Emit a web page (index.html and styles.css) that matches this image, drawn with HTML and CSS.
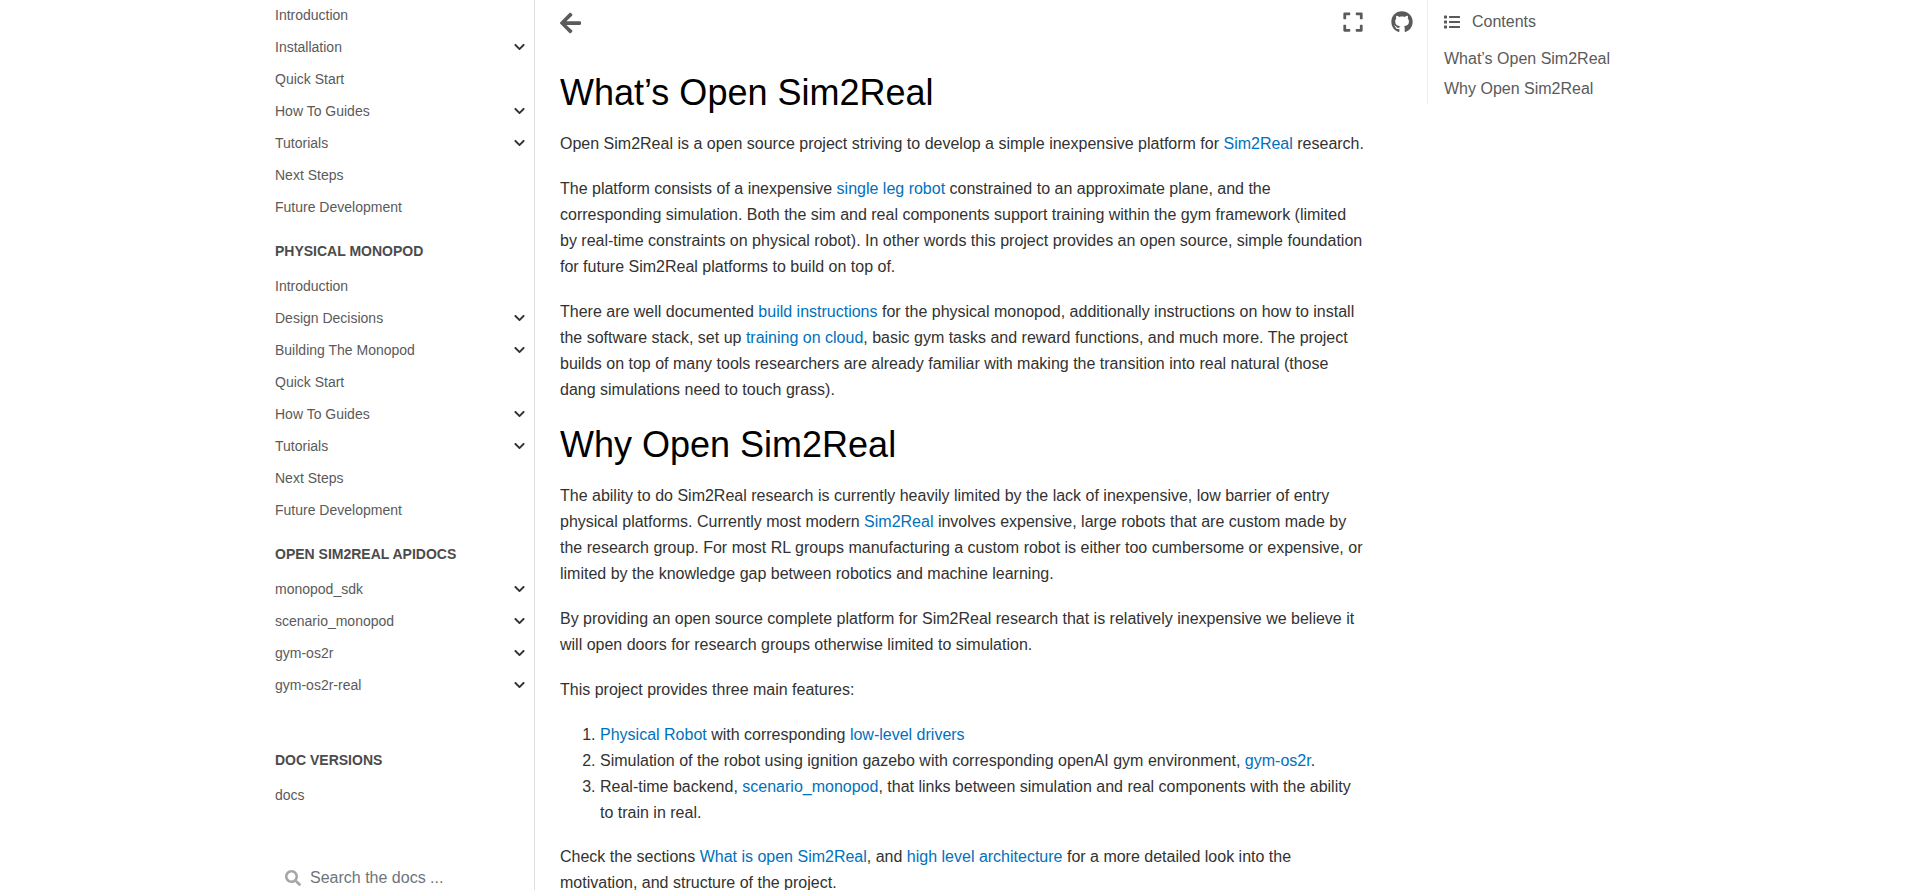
FILE: index.html
```html
<!DOCTYPE html>
<html lang="en">
<head>
<meta charset="utf-8">
<title>What’s Open Sim2Real</title>
<link rel="stylesheet" href="styles.css">
</head>
<body>
<svg class="sprite" aria-hidden="true">
  <symbol id="chevron" viewBox="0 0 448 512"><path d="M207.029 381.476L12.686 187.132c-9.373-9.373-9.373-24.569 0-33.941l22.667-22.667c9.357-9.357 24.522-9.375 33.901-.04L224 284.505l154.745-154.021c9.379-9.335 24.544-9.317 33.901.04l22.667 22.667c9.373 9.373 9.373 24.569 0 33.941L240.971 381.476c-9.373 9.372-24.569 9.372-33.942 0z"/></symbol>
</svg>
<div class="layout">
  <nav class="sidebar" aria-label="Main navigation">
    <ul class="nav-list">
      <li><a href="#">Introduction</a></li>
      <li><a href="#">Installation</a><button type="button" aria-label="Expand Installation"><svg><use href="#chevron"/></svg></button></li>
      <li><a href="#">Quick Start</a></li>
      <li><a href="#">How To Guides</a><button type="button" aria-label="Expand How To Guides"><svg><use href="#chevron"/></svg></button></li>
      <li><a href="#">Tutorials</a><button type="button" aria-label="Expand Tutorials"><svg><use href="#chevron"/></svg></button></li>
      <li><a href="#">Next Steps</a></li>
      <li><a href="#">Future Development</a></li>
    </ul>
    <p class="caption">PHYSICAL MONOPOD</p>
    <ul class="nav-list">
      <li><a href="#">Introduction</a></li>
      <li><a href="#">Design Decisions</a><button type="button" aria-label="Expand Design Decisions"><svg><use href="#chevron"/></svg></button></li>
      <li><a href="#">Building The Monopod</a><button type="button" aria-label="Expand Building The Monopod"><svg><use href="#chevron"/></svg></button></li>
      <li><a href="#">Quick Start</a></li>
      <li><a href="#">How To Guides</a><button type="button" aria-label="Expand How To Guides"><svg><use href="#chevron"/></svg></button></li>
      <li><a href="#">Tutorials</a><button type="button" aria-label="Expand Tutorials"><svg><use href="#chevron"/></svg></button></li>
      <li><a href="#">Next Steps</a></li>
      <li><a href="#">Future Development</a></li>
    </ul>
    <p class="caption">OPEN SIM2REAL APIDOCS</p>
    <ul class="nav-list">
      <li><a href="#">monopod_sdk</a><button type="button" aria-label="Expand monopod_sdk"><svg><use href="#chevron"/></svg></button></li>
      <li><a href="#">scenario_monopod</a><button type="button" aria-label="Expand scenario_monopod"><svg><use href="#chevron"/></svg></button></li>
      <li><a href="#">gym-os2r</a><button type="button" aria-label="Expand gym-os2r"><svg><use href="#chevron"/></svg></button></li>
      <li><a href="#">gym-os2r-real</a><button type="button" aria-label="Expand gym-os2r-real"><svg><use href="#chevron"/></svg></button></li>
    </ul>
    <div class="versions">
      <p class="caption">DOC VERSIONS</p>
      <ul class="nav-list">
        <li><a href="#">docs</a></li>
      </ul>
    </div>
    <form class="search">
      <svg viewBox="0 0 512 512" aria-hidden="true"><path d="M505 442.7L405.3 343c-4.500-4.500-10.600-7-17-7H372c27.600-35.300 44-79.700 44-128C416 93.100 322.900 0 208 0S0 93.100 0 208s93.100 208 208 208c48.300 0 92.700-16.400 128-44v16.300c0 6.400 2.500 12.500 7 17l99.700 99.700c9.400 9.400 24.600 9.400 33.900 0l28.300-28.300c9.400-9.400 9.400-24.600.1-34zM208 336c-70.700 0-128-57.200-128-128 0-70.700 57.200-128 128-128 70.700 0 128 57.200 128 128 0 70.700-57.200 128-128 128z"/></svg>
      <input type="search" placeholder="Search the docs ..." aria-label="Search the docs">
    </form>
  </nav>

  <div class="page">
    <div class="topbar">
      <button type="button" aria-label="Toggle navigation"><svg class="icon-arrow" viewBox="0 0 448 512"><path d="M257.500 445.100l-22.200 22.200c-9.400 9.400-24.600 9.400-33.900 0L7 273c-9.400-9.400-9.400-24.600 0-33.900L201.400 44.700c9.400-9.400 24.600-9.400 33.900 0l22.200 22.200c9.500 9.500 9.300 25-.4 34.300L136.600 216H424c13.300 0 24 10.700 24 24v32c0 13.300-10.700 24-24 24H136.600l120.500 114.800c9.800 9.300 10 24.800.4 34.300z"/></svg></button>
      <div class="tools">
        <button type="button" aria-label="Fullscreen mode"><svg class="icon-expand" viewBox="0 0 448 512"><path d="M0 180V56c0-13.300 10.700-24 24-24h124c6.600 0 12 5.400 12 12v40c0 6.600-5.400 12-12 12H64v84c0 6.600-5.400 12-12 12H12c-6.600 0-12-5.400-12-12zM288 44v40c0 6.600 5.400 12 12 12h84v84c0 6.600 5.400 12 12 12h40c6.600 0 12-5.400 12-12V56c0-13.300-10.700-24-24-24H300c-6.600 0-12 5.400-12 12zm148 276h-40c-6.600 0-12 5.400-12 12v84h-84c-6.600 0-12 5.400-12 12v40c0 6.600 5.400 12 12 12h124c13.300 0 24-10.700 24-24V332c0-6.600-5.400-12-12-12zM160 468v-40c0-6.600-5.400-12-12-12H64v-84c0-6.600-5.400-12-12-12H12c-6.600 0-12 5.400-12 12v124c0 13.300 10.700 24 24 24h124c6.600 0 12-5.400 12-12z"/></svg></button>
        <a href="#" aria-label="GitHub repository"><svg class="icon-github" viewBox="0 0 496 512"><path d="M165.900 397.400c0 2-2.300 3.600-5.200 3.600-3.300.3-5.600-1.300-5.600-3.600 0-2 2.300-3.600 5.200-3.600 3-.3 5.600 1.300 5.600 3.600zm-31.100-4.500c-.7 2 1.300 4.300 4.300 4.900 2.600 1 5.600 0 6.200-2s-1.300-4.300-4.300-5.200c-2.600-.7-5.500.3-6.200 2.300zm44.200-1.700c-2.900.7-4.900 2.600-4.600 4.900.3 2 2.900 3.300 5.900 2.600 2.900-.7 4.900-2.600 4.600-4.600-.3-1.900-3-3.200-5.900-2.900zM244.800 8C106.100 8 0 113.300 0 252c0 110.900 69.800 205.800 169.500 239.200 12.800 2.300 17.300-5.600 17.300-12.100 0-6.200-.3-40.400-.3-61.400 0 0-70 15-84.700-29.800 0 0-11.400-29.100-27.800-36.600 0 0-22.900-15.700 1.600-15.400 0 0 24.900 2 38.600 25.800 21.900 38.600 58.600 27.500 72.900 20.900 2.300-16 8.800-27.100 16-33.700-55.900-6.200-112.300-14.300-112.300-110.500 0-27.500 7.600-41.300 23.600-58.900-2.600-6.500-11.100-33.300 2.600-67.900 20.900-6.500 69 27 69 27 20-5.600 41.500-8.500 62.800-8.500s42.800 2.900 62.800 8.500c0 0 48.100-33.600 69-27 13.700 34.700 5.200 61.400 2.600 67.900 16 17.700 25.800 31.500 25.800 58.900 0 96.500-58.900 104.200-114.800 110.500 9.200 7.900 17 22.900 17 46.400 0 33.700-.3 75.400-.3 83.600 0 6.500 4.600 14.400 17.300 12.100C428.200 457.800 496 362.900 496 252 496 113.300 383.500 8 244.800 8zM97.200 352.900c-1.300 1-1 3.300.7 5.200 1.600 1.600 3.900 2.300 5.200 1 1.300-1 1-3.300-.7-5.200-1.600-1.600-3.900-2.300-5.200-1zm-10.800-8.100c-.7 1.300.3 2.900 2.300 3.900 1.600 1 3.600.7 4.300-.7.7-1.300-.3-2.900-2.300-3.900-2-.6-3.600-.3-4.300.7zm32.400 35.600c-1.600 1.300-1 4.300 1.300 6.200 2.300 2.300 5.200 2.600 6.500 1 1.300-1.300.7-4.300-1.300-6.200-2.200-2.300-5.200-2.600-6.500-1zm-11.400-14.700c-1.600 1-1.600 3.600 0 5.900 1.600 2.300 4.300 3.300 5.600 2.300 1.600-1.300 1.600-3.900 0-6.200-1.400-2.300-4-3.300-5.600-2z"/></svg></a>
      </div>
    </div>
    <main class="article">
      <h1>What’s Open Sim2Real</h1>
      <p>Open Sim2Real is a open source project striving to develop a simple inexpensive platform for <a href="#">Sim2Real</a> research.</p>
      <p>The platform consists of a inexpensive <a href="#">single leg robot</a> constrained to an approximate plane, and the corresponding simulation. Both the sim and real components support training within the gym framework (limited by real-time constraints on physical robot). In other words this project provides an open source, simple foundation for future Sim2Real platforms to build on top of.</p>
      <p>There are well documented <a href="#">build instructions</a> for the physical monopod, additionally instructions on how to install the software stack, set up <a href="#">training on cloud</a>, basic gym tasks and reward functions, and much more. The project builds on top of many tools researchers are already familiar with making the transition into real natural (those dang simulations need to touch grass).</p>
      <h1>Why Open Sim2Real</h1>
      <p>The ability to do Sim2Real research is currently heavily limited by the lack of inexpensive, low barrier of entry physical platforms. Currently most modern <a href="#">Sim2Real</a> involves expensive, large robots that are custom made by the research group. For most RL groups manufacturing a custom robot is either too cumbersome or expensive, or limited by the knowledge gap between robotics and machine learning.</p>
      <p>By providing an open source complete platform for Sim2Real research that is relatively inexpensive we believe it will open doors for research groups otherwise limited to simulation.</p>
      <p>This project provides three main features:</p>
      <ol>
        <li><a href="#">Physical Robot</a> with corresponding <a href="#">low-level drivers</a></li>
        <li>Simulation of the robot using ignition gazebo with corresponding openAI gym environment, <a href="#">gym-os2r</a>.</li>
        <li>Real-time backend, <a href="#">scenario_monopod</a>, that links between simulation and real components with the ability to train in real.</li>
      </ol>
      <p>Check the sections <a href="#">What is open Sim2Real</a>, and <a href="#">high level architecture</a> for a more detailed look into the motivation, and structure of the project.</p>
    </main>
  </div>

  <aside class="toc">
    <div class="toc-title"><svg viewBox="0 0 512 512" aria-hidden="true"><path d="M80 368H16a16 16 0 0 0-16 16v64a16 16 0 0 0 16 16h64a16 16 0 0 0 16-16v-64a16 16 0 0 0-16-16zm0-320H16A16 16 0 0 0 0 64v64a16 16 0 0 0 16 16h64a16 16 0 0 0 16-16V64a16 16 0 0 0-16-16zm0 160H16a16 16 0 0 0-16 16v64a16 16 0 0 0 16 16h64a16 16 0 0 0 16-16v-64a16 16 0 0 0-16-16zm416 176H176a16 16 0 0 0-16 16v32a16 16 0 0 0 16 16h320a16 16 0 0 0 16-16v-32a16 16 0 0 0-16-16zm0-320H176a16 16 0 0 0-16 16v32a16 16 0 0 0 16 16h320a16 16 0 0 0 16-16V80a16 16 0 0 0-16-16zm0 160H176a16 16 0 0 0-16 16v32a16 16 0 0 0 16 16h320a16 16 0 0 0 16-16v-32a16 16 0 0 0-16-16z"/></svg>Contents</div>
    <nav aria-label="Contents">
      <a href="#">What’s Open Sim2Real</a>
      <a href="#">Why Open Sim2Real</a>
    </nav>
  </aside>
</div>
</body>
</html>
```
FILE: styles.css
```css
* {
  box-sizing: border-box;
}

body {
  margin: 0;
  height: 100vh;
  overflow: hidden;
  background: #fff;
  color: #323232;
  font-family: "Liberation Sans", Arial, sans-serif;
  font-size: 16px;
  line-height: 26px;
}

a {
  color: #0071bc;
  text-decoration: none;
}

button {
  display: flex;
  padding: 0;
  border: 0;
  background: none;
  color: inherit;
  cursor: pointer;
}

svg {
  display: block;
  fill: currentColor;
}

.sprite {
  display: none;
}

.layout {
  display: grid;
  grid-template-columns: 279px minmax(0, 1fr) 237px;
  max-width: 1408px;
  margin: 0 auto;
}

/* Left navigation */
.sidebar {
  height: 100vh;
  overflow: hidden;
  padding: 0 9px 0 19px;
  border-right: 1px solid #dfdfdf;
  font-size: 14px;
  line-height: 24px;
}

.nav-list {
  margin: 0;
  padding: 0;
  list-style: none;
}

.nav-list li {
  display: flex;
  align-items: center;
  justify-content: space-between;
  padding: 3px 0 5px;
}

.nav-list a {
  color: #5a5a5a;
}

.nav-list svg {
  width: 11px;
  height: 12px;
}

.caption {
  margin: 15px 0 8px;
  color: #4b4b4b;
  font-weight: bold;
}

.versions {
  padding-top: 31px;
}

.search {
  display: flex;
  align-items: center;
  gap: 9px;
  margin-top: 50px;
  padding: 4px 10px;
}

.search svg {
  width: 16px;
  height: 16px;
  fill: #a4a6a7;
}

.search input {
  flex: 1;
  min-width: 0;
  padding: 0;
  border: 0;
  outline: 0;
  background: none;
  color: #323232;
  font: inherit;
  font-size: 16px;
  line-height: 24px;
}

.search input::placeholder {
  color: #6c757d;
}

/* Page column */
.page {
  padding: 0 61px 0 25px;
}

.topbar {
  display: flex;
  align-items: flex-start;
  justify-content: space-between;
  margin-right: -47px;
  padding: 11px 0 10px;
  color: #5a5a5a;
}

.tools {
  display: flex;
  gap: 28px;
}

.tools a {
  color: inherit;
}

.icon-arrow {
  width: 21px;
  height: 24px;
}

.icon-expand {
  width: 20px;
  height: 22px;
}

.icon-github {
  width: 22px;
  height: 22px;
}

.article h1 {
  margin: 0 0 16px;
  padding-top: 26px;
  color: #000;
  font-size: 36px;
  font-weight: normal;
  line-height: 44px;
}

.article p {
  margin: 0 0 19px;
}

.article p + h1 {
  padding-top: 1px;
}

.article ol {
  margin: 0 0 18px;
  padding-left: 40px;
}

/* Table of contents */
.toc {
  align-self: start;
  padding: 9px 16px 0;
  border-left: 1px solid #eee;
  color: #5a5a5a;
}

.toc-title {
  display: flex;
  align-items: center;
  gap: 12px;
}

.toc-title svg {
  width: 16px;
  height: 16px;
}

.toc nav {
  padding-top: 9px;
}

.toc nav a {
  display: block;
  padding: 2px 0;
  color: inherit;
}
```
